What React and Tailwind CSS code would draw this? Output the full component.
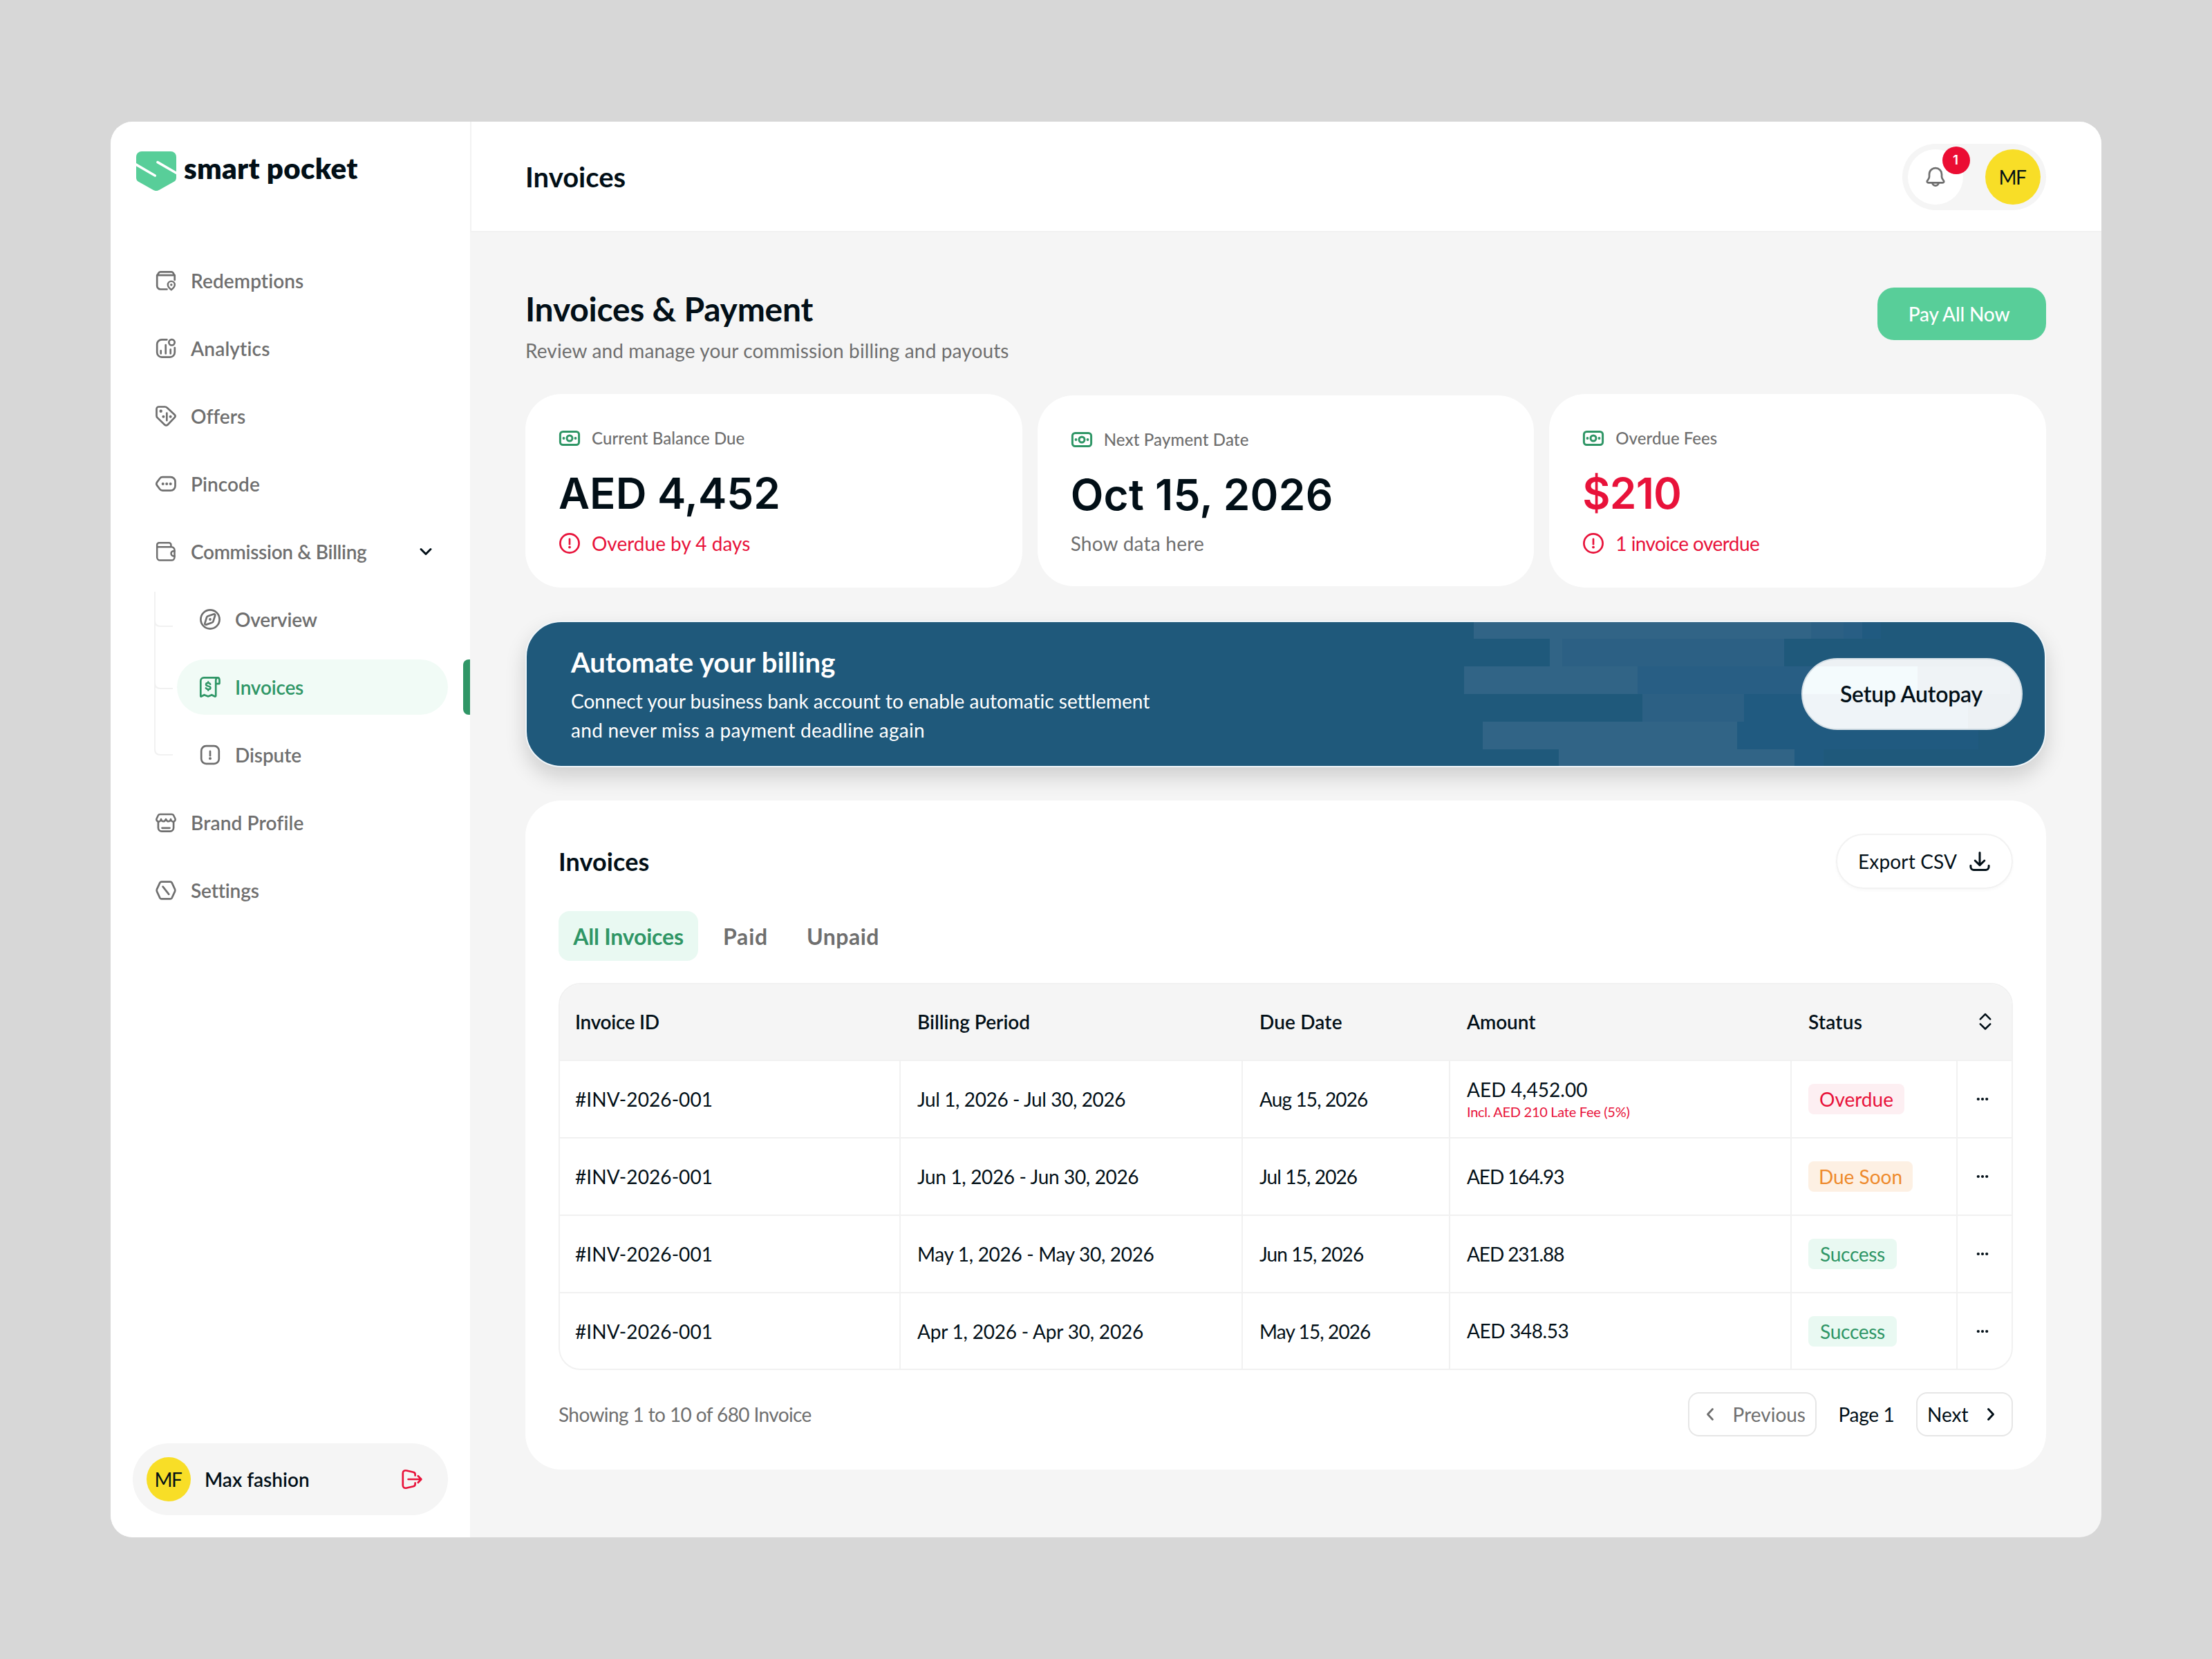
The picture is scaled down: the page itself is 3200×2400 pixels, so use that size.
import { useState } from "react";

function Icon({ children, className = "size-8", strokeWidth = 2.7 }) {
  return (
    <svg
      viewBox="0 0 32 32"
      className={`shrink-0 ${className}`}
      fill="none"
      stroke="currentColor"
      strokeWidth={strokeWidth}
      strokeLinecap="round"
      strokeLinejoin="round"
      aria-hidden="true"
    >
      {children}
    </svg>
  );
}

const Dot = ({ cx, cy, r = 1.8 }) => <circle cx={cx} cy={cy} r={r} fill="currentColor" stroke="none" />;

const RedemptionsIcon = () => (
  <Icon>
    <path d="M17.5 28.5H8.2a5 5 0 0 1-5-5V8.8l2.4-4.1c.6-.9 1.3-1.3 2.4-1.3h16c1.1 0 1.8.4 2.4 1.3l2.3 4.1V15" />
    <path d="M3.4 8.2h25.2" />
    <path d="M23.8 29.2c-2.6-2.1-5-4.5-5-7.3a5 5 0 0 1 10 0c0 2.8-2.4 5.2-5 7.3z" strokeWidth="2.4" />
    <Dot cx="23.8" cy="22" r="1.7" />
  </Icon>
);

const AnalyticsIcon = () => (
  <Icon>
    <path d="M17.4 3.3H10A6.800 6.800 0 0 0 3.2 10.100v11.700a6.800 6.800 0 0 0 6.800 6.800h12a6.800 6.800 0 0 0 6.800-6.800V15" />
    <circle cx="24.5" cy="7.3" r="4.2" />
    <path d="M8.7 19.3v4.2M15.7 11v12.500M22.700 17.500v6" />
  </Icon>
);

const OffersIcon = () => (
  <Icon>
    <path d="M2.5 5.6a3.1 3.1 0 0 1 3.1-3.1h9c1.3 0 2.1.3 3 1.2l10.8 10c1.5 1.5 1.5 3 .1 4.500l-9.700 10c-1.600 1.600-3.200 1.600-4.800.1L3.8 18.4c-.9-.9-1.300-1.700-1.300-3z" />
    <path d="M17.3 11.6v10.6" />
    <Dot cx="8.7" cy="8.8" r="2.2" />
    <Dot cx="12.4" cy="16.700" r="2" />
    <Dot cx="22.6" cy="16.700" r="2" />
  </Icon>
);

const PincodeIcon = () => (
  <Icon>
    <path d="M11.2 6.1h11.600a6.700 6.700 0 0 1 6.700 6.700v6.200a6.700 6.700 0 0 1-6.700 6.700H11.200c-1.700 0-2.900-.6-3.900-1.900l-4-5.400c-1.300-1.700-1.300-3.300 0-5l4-5.400c1-1.300 2.200-1.900 3.900-1.900z" />
    <Dot cx="11.7" cy="16" r="2" />
    <Dot cx="17.2" cy="16" r="2" />
    <Dot cx="22.7" cy="16" r="2" />
  </Icon>
);

const WalletIcon = () => (
  <Icon strokeWidth="2.5">
    <path d="M3.2 9.3v14.900a4.400 4.400 0 0 0 4.400 4.400h16.500a4.400 4.400 0 0 0 4.400-4.400V13.700a4.400 4.400 0 0 0-4.400-4.400H3.200zV6.200a2.900 2.900 0 0 1 2.900-2.900h14.400a2.900 2.900 0 0 1 2.900 2.900v3.100" />
    <path d="M28.5 15.2h-1.400a3.600 3.600 0 0 0 0 7.200h1.400" />
  </Icon>
);

const CompassIcon = () => (
  <Icon>
    <circle cx="16" cy="16" r="13.6" />
    <path d="M11 13.2c.3-1 1-1.700 2-2l8-2.700c1.600-.5 2.600.4 2.100 2l-2.600 8.300c-.3 1-1 1.700-2 2l-8.100 2.800c-1.600.5-2.500-.4-2-2z" />
    <Dot cx="16" cy="16" r="1.9" />
  </Icon>
);

const ReceiptIcon = () => (
  <Icon>
    <path d="M27.300 2.300H6.900A4.600 4.600 0 0 0 2.300 6.900V28.900q0 1 1 .6l4.200-2.300 3.800 1.500q1.800 1.300 3.600 0l3.400-1.500 4.400 2.300q1.400.4 1.500-1V7.200c0-2.900 1-4.900 2.700-4.900 1.500 0 2.600 1.600 2.600 4v3.600q0 1.300-1.300 1.300h-3.600" />
    <path
      d="M16.300 11.800c-.6-1.100-1.700-1.700-3.100-1.700-1.900 0-3.200.8-3.200 2.200 0 3.200 6.500 1.400 6.500 4.600 0 1.500-1.400 2.300-3.300 2.300-1.600 0-2.800-.7-3.400-1.800M13.200 8.600v1.500M13.200 19.200v1.500"
      strokeWidth="2.5"
    />
  </Icon>
);

const DisputeIcon = () => (
  <Icon>
    <rect x="3.2" y="3.2" width="25.6" height="25.6" rx="7" />
    <path d="M16 10.800v6.400" />
    <Dot cx="16" cy="21.200" r="2" />
  </Icon>
);

const StoreIcon = () => (
  <Icon>
    <path d="M4.900 15.400v8.200a5 5 0 0 0 5 5h12.200a5 5 0 0 0 5-5v-8.200M10.500 23.800h11" />
    <path
      d="M3.900 14.200c-1.500-1-1.900-2.600-1.100-4.300l2-4.200C5.400 4.600 6.300 4 7.600 4h16.800c1.300 0 2.200.6 2.800 1.700l2 4.200c.8 1.700.4 3.300-1.100 4.300-2.200 1-4.500.2-5.100-3.200-.8 4.400-5.500 4.400-7 0-1.500 4.400-6.200 4.400-7 0-.6 3.400-2.900 4.200-5.100 3.200z"
      strokeWidth="2.5"
    />
  </Icon>
);

const SettingsIcon = () => (
  <Icon>
    <path d="M9.600 3.600h12.800q1.400 0 2.200 1.300l4.400 9.500q.7 1.600 0 3.200l-4.400 9.500q-.8 1.300-2.200 1.300H9.600q-1.400 0-2.200-1.300L3 17.600q-.7-1.600 0-3.200l4.400-9.500q.8-1.300 2.200-1.300z" />
    <path d="M11.600 10.600l8.600 11" />
  </Icon>
);

const BellIcon = () => (
  <Icon className="size-8 text-[#6f6f6f]">
    <path d="M16 3.200c-5 0-9 3.700-9 8.700v3.600c0 1.600-.4 2.600-1.500 4l-1.200 1.700c-1 1.500-.3 3.100 1.500 3.100h20.400c1.800 0 2.500-1.600 1.500-3.100l-1.200-1.700c-1.100-1.400-1.500-2.400-1.500-4v-3.600c0-5-4-8.700-9-8.700z" />
    <path d="M11.300 24.500c.6 2.500 2.400 4.100 4.700 4.100s4.100-1.600 4.700-4.100" />
  </Icon>
);

const LogoutIcon = () => (
  <Icon className="size-8 text-[#e8123a]">
    <path d="M20.600 10.600V8.900c0-1.800-.8-2.800-2.500-3.200L8.500 3.500C5 2.700 2.800 3.900 2.800 7.200v17.600c0 3.300 2.200 4.500 5.700 3.700l9.600-2.200c1.700-.4 2.500-1.400 2.500-3.200v-1.700" />
    <path d="M10.600 16h18.600M24.800 11.200l4.600 4.800-4.600 4.800" />
  </Icon>
);

const MoneyIcon = () => (
  <Icon className="size-8 text-[#2f9666]" strokeWidth="3">
    <rect x="2.4" y="6.400" width="27.200" height="19.200" rx="4" />
    <circle cx="16" cy="16" r="4" />
    <Dot cx="7.5" cy="16" r="1.900" />
    <Dot cx="24.5" cy="16" r="1.900" />
  </Icon>
);

const AlertIcon = () => (
  <Icon>
    <circle cx="16" cy="16" r="13.6" />
    <path d="M16 9.800v7.400" />
    <Dot cx="16" cy="21.600" r="1.900" />
  </Icon>
);

const DownloadIcon = () => (
  <Icon strokeWidth="3">
    <path d="M16 3.400v18M9.200 15l6.800 6.600 6.800-6.600M2.900 22.300v1.800a4.400 4.400 0 0 0 4.400 4.400h17.400a4.400 4.400 0 0 0 4.400-4.400v-1.800" />
  </Icon>
);

const Logo = () => (
  <svg viewBox="0 0 58 57" className="h-[57px] w-[58px] shrink-0" aria-hidden="true">
    <path
      d="M8 0h42a8 8 0 0 1 8 8v30c0 2.600-1 4.400-3.200 5.800L33 56c-2.700 1.500-5.300 1.500-8 0L3.200 43.800C1 42.400 0 40.600 0 38V8a8 8 0 0 1 8-8z"
      fill="#58ce99"
    />
    <path d="M-1 18.600L27.200 35M31 15.600L59 31.800" stroke="#fff" strokeWidth="3.6" strokeLinecap="round" />
  </svg>
);

const topNav = [
  { label: "Redemptions", icon: RedemptionsIcon, tracking: "tracking-[0.1px]" },
  { label: "Analytics", icon: AnalyticsIcon, tracking: "tracking-[0.15px]" },
  { label: "Offers", icon: OffersIcon, tracking: "" },
  { label: "Pincode", icon: PincodeIcon, tracking: "tracking-[0.05px]" },
];

const billingNav = [
  { label: "Overview", icon: CompassIcon, tracking: "tracking-[-0.2px]" },
  { label: "Invoices", icon: ReceiptIcon, tracking: "tracking-[-0.2px]" },
  { label: "Dispute", icon: DisputeIcon, tracking: "tracking-[-0.1px]" },
];

const bottomNav = [
  { label: "Brand Profile", icon: StoreIcon, tracking: "tracking-[0.15px]" },
  { label: "Settings", icon: SettingsIcon, tracking: "tracking-[-0.15px]" },
];

const invoices = [
  {
    period: "Jul 1, 2026 - Jul 30, 2026",
    periodTracking: "tracking-[-0.39px]",
    due: "Aug 15, 2026",
    amount: "AED 4,452.00",
    amountTracking: "tracking-[0.05px]",
    note: "Incl. AED 210 Late Fee (5%)",
    status: "Overdue",
  },
  {
    period: "Jun 1, 2026 - Jun 30, 2026",
    periodTracking: "tracking-[-0.35px]",
    due: "Jul 15, 2026",
    amount: "AED 164.93",
    amountTracking: "tracking-[-1.1px]",
    status: "Due Soon",
  },
  {
    period: "May 1, 2026 - May 30, 2026",
    periodTracking: "tracking-[-0.31px]",
    due: "Jun 15, 2026",
    amount: "AED 231.88",
    amountTracking: "tracking-[-1.1px]",
    status: "Success",
  },
  {
    period: "Apr 1, 2026 - Apr 30, 2026",
    periodTracking: "tracking-[-0.2px]",
    due: "May 15, 2026",
    amount: "AED 348.53",
    amountTracking: "tracking-[-0.4px]",
    status: "Success",
  },
];

const statusTone = {
  Overdue: "bg-[#fdeff2] text-[#e8123a] w-[139px]",
  "Due Soon": "bg-[#fdf0e3] text-[#ee8a2c] w-[151px]",
  Success: "bg-[#e9f9f2] text-[#2f9666] w-[128px] tracking-[-0.28px]",
};

const tabs = [
  { label: "All Invoices", className: "w-[202px] tracking-[-0.2px]" },
  { label: "Paid", className: "px-5 tracking-[0.8px]" },
  { label: "Unpaid", className: "px-5 tracking-[0.5px]" },
];

const columns = "grid grid-cols-[491px_495px_300px_494px_240px_80px]";

function NavItem({ item, active }) {
  const Glyph = item.icon;
  return (
    <a
      className={`relative flex h-20 items-center gap-5 rounded-full px-8 text-[28px] font-semibold ${
        active ? "bg-[#f1fbf6] text-[#2f9666]" : "text-[#6f6f6f]"
      }`}
    >
      <Glyph />
      <span className={item.tracking}>{item.label}</span>
      {active && <span className="absolute top-0 -right-8 h-20 w-2.5 rounded-l-lg bg-[#2f9666]" />}
    </a>
  );
}

function Avatar({ className }) {
  return (
    <span className={`flex items-center justify-center rounded-full bg-[#f8de27] pr-0.5 text-[28px] tracking-[-1.5px] ${className}`}>
      MF
    </span>
  );
}

function Sidebar() {
  return (
    <aside className="flex w-[520px] shrink-0 flex-col bg-white px-8 pt-[43px] pb-8">
      <div className="flex items-center gap-[11px] pl-[5px]">
        <Logo />
        <span className="pb-2 text-[42px] leading-[49px] font-extrabold tracking-[0.3px]">smart pocket</span>
      </div>

      <nav className="mt-[90px] flex flex-col gap-[18px]">
        {topNav.map((item) => (
          <NavItem key={item.label} item={item} />
        ))}
        <button className="flex h-20 items-center gap-5 pr-4 pl-8 text-[28px] font-semibold text-[#6f6f6f]">
          <WalletIcon />
          <span className="tracking-[-0.31px]">Commission & Billing</span>
          <Icon className="ml-auto size-8 text-[#020f17]" strokeWidth="3">
            <path d="M9 12.500l7 7 7-7" />
          </Icon>
        </button>
        <div className="flex">
          <svg
            viewBox="0 0 64 276"
            className="h-[276px] w-16 shrink-0"
            fill="none"
            stroke="#f1f1f1"
            strokeWidth="2"
            aria-hidden="true"
          >
            <path d="M32 -1v229q0 8 8 8h18M32 42q0 8 8 8h18M32 132q0 8 8 8h18" />
          </svg>
          <div className="flex flex-1 flex-col gap-[18px]">
            {billingNav.map((item) => (
              <NavItem key={item.label} item={item} active={item.label === "Invoices"} />
            ))}
          </div>
        </div>
        {bottomNav.map((item) => (
          <NavItem key={item.label} item={item} />
        ))}
      </nav>

      <div className="mt-auto flex h-[104px] items-center rounded-full bg-[#f5f5f5] pr-9 pl-5">
        <Avatar className="size-16" />
        <span className="ml-5 text-[28px] font-semibold">Max fashion</span>
        <button className="ml-auto">
          <LogoutIcon />
        </button>
      </div>
    </aside>
  );
}

function Header() {
  return (
    <header className="flex h-40 shrink-0 items-center justify-between border-b-2 border-l-2 border-[#f2f2f2] bg-white pt-0.5 pr-20 pl-[78px]">
      <h1 className="text-[40px] leading-[50px] font-bold">Invoices</h1>
      <div className="flex h-24 w-52 items-center justify-between rounded-full bg-[#f5f5f5] px-2">
        <button className="relative flex size-20 items-center justify-center rounded-full bg-white">
          <BellIcon />
          <span className="absolute -top-1 left-[50px] flex size-10 items-center justify-center rounded-full bg-[#eb0d33] pr-0.5 font-['Inter'] text-[19px] font-semibold text-white">
            1
          </span>
        </button>
        <Avatar className="size-20" />
      </div>
    </header>
  );
}

function SummaryCard({ label, labelTracking, value, valueClass, children, className }) {
  return (
    <div className={`flex flex-col rounded-[52px] bg-white p-12 ${className}`}>
      <div className="flex h-8 items-center gap-4 text-2xl font-medium text-[#6f6f6f]">
        <MoneyIcon />
        <span className={labelTracking}>{label}</span>
      </div>
      <p className={`mt-6 font-['Inter'] text-[62px] leading-[80px] font-semibold ${valueClass}`}>{value}</p>
      <div className="mt-4 flex flex-1 items-center gap-4 text-[28px] leading-7">{children}</div>
    </div>
  );
}

function AutopayBanner() {
  return (
    <section className="relative mt-12 flex h-[212px] justify-between overflow-hidden rounded-[52px] border-2 border-[#f0f6fa] bg-[#1f597b] pr-8 pl-16 text-white shadow-[0_14px_30px_rgba(0,0,0,0.16)]">
      <svg viewBox="0 0 2196 208" className="absolute inset-0 h-full w-full" aria-hidden="true">
        <g fill="#316486">
          <rect x="1370" width="488" height="24" />
          <rect x="1480" y="24" width="18" height="40" />
          <rect x="1356" y="64" width="251" height="40" />
          <rect x="1383" y="144" width="368" height="40" />
          <rect x="1493" y="184" width="341" height="24" />
        </g>
        <g fill="#2c6084">
          <rect x="1858" width="47" height="24" />
          <rect x="1498" y="24" width="321" height="40" />
          <rect x="1614" y="104" width="147" height="40" />
        </g>
        <g fill="#285e84">
          <rect x="1905" width="27" height="24" />
          <rect x="1607" y="64" width="405" height="40" />
        </g>
        <g fill="#205a80">
          <rect x="1932" width="27" height="24" />
          <rect x="1761" y="104" width="324" height="40" />
          <rect x="1751" y="144" width="349" height="40" />
          <rect x="1834" y="184" width="42" height="24" />
        </g>
      </svg>
      <div className="relative pt-[33px]">
        <h3 className="text-[40px] leading-[50px] font-bold">Automate your billing</h3>
        <p className="mt-[10px] text-[28px] leading-[42px]">
          <span className="tracking-[-0.01px]">Connect your business bank account to enable automatic settlement</span>
          <br />
          <span className="tracking-[0.3px]">and never miss a payment deadline again</span>
        </p>
      </div>
      <button className="relative mt-[52px] flex h-[104px] w-80 items-center justify-center overflow-hidden rounded-full border-2 border-[#d5dfe6] bg-[#edf1f4] text-[32px] font-semibold tracking-[-0.19px] text-[#020f17]">
        <svg viewBox="0 0 316 100" className="absolute inset-0 h-full w-full" aria-hidden="true">
          <rect y="10" width="166" height="40" fill="#f4fbfd" />
          <rect y="50" width="239" height="50" fill="#eff4f8" />
          <rect x="166" y="10" width="134" height="40" fill="#eff3f6" />
        </svg>
        <span className="relative pr-0.5">Setup Autopay</span>
      </button>
    </section>
  );
}

function InvoiceTable() {
  return (
    <div className="mt-8 h-[560px] overflow-hidden rounded-[32px] border-2 border-[#f1f1f1] text-[28px]">
      <div className={`${columns} h-[111px] items-center border-b-2 border-[#f1f1f1] bg-[#f5f5f5] pb-0.5 font-semibold`}>
        <span className="pl-[22px] tracking-[-0.3px]">Invoice ID</span>
        <span className="pl-[26px]">Billing Period</span>
        <span className="pl-[26px] tracking-[0.15px]">Due Date</span>
        <span className="pl-[26px] tracking-[-0.1px]">Amount</span>
        <span className="pl-[26px] tracking-[0.2px]">Status</span>
        <Icon className="ml-[26px] size-8" strokeWidth="2.6">
          <path d="M8.800 12.300l7.200-7.200 7.200 7.200M8.800 19.300l7.200 7.200 7.200-7.200" />
        </Icon>
      </div>
      {invoices.map((row) => (
        <div key={row.period} className={`${columns} h-28 border-b-2 border-[#f1f1f1] last:h-[109px] last:border-b-0`}>
          <span className="flex items-center pl-[22px] tracking-[0.08px]">#INV-2026-001</span>
          <span className={`flex items-center border-l-2 border-[#f1f1f1] pl-6 ${row.periodTracking}`}>{row.period}</span>
          <span className="flex items-center border-l-2 border-[#f1f1f1] pl-6 tracking-[-0.88px]">{row.due}</span>
          <div className="flex flex-col justify-center border-l-2 border-[#f1f1f1] pl-6">
            <span className={`leading-[35px] ${row.amountTracking}`}>{row.amount}</span>
            {row.note && (
              <span className="mt-0.5 text-xl leading-[25px] tracking-[-0.29px] text-[#e8123a]">{row.note}</span>
            )}
          </div>
          <div className="flex items-center border-l-2 border-[#f1f1f1] pl-6">
            <span className={`flex h-11 items-center justify-center rounded-lg ${statusTone[row.status]}`}>{row.status}</span>
          </div>
          <button className="flex items-center border-l-2 border-[#f1f1f1] pl-5">
            <Icon>
              <Dot cx="9.8" cy="16" r="2.1" />
              <Dot cx="16" cy="16" r="2.1" />
              <Dot cx="22.2" cy="16" r="2.1" />
            </Icon>
          </button>
        </div>
      ))}
    </div>
  );
}

export default function App() {
  const [tab, setTab] = useState("All Invoices");

  return (
    <div className="h-[2400px] w-[3200px] bg-[#d7d7d7] px-40 pt-44 font-['Lato',sans-serif] text-[#020f17] [font-variant-ligatures:none]">
      <div className="flex h-[2048px] overflow-hidden rounded-[32px] bg-[#f5f5f5]">
        <Sidebar />

        <div className="flex flex-1 flex-col">
          <Header />
          <main className="px-20 pt-20">
            <div className="flex items-start justify-between">
              <div>
                <h2 className="pt-px text-5xl leading-[60px] font-bold tracking-[-0.25px]">Invoices & Payment</h2>
                <p className="mt-[13px] text-[28px] leading-[35px] tracking-[0.13px] text-[#6f6f6f]">
                  Review and manage your commission billing and payouts
                </p>
              </div>
              <button className="h-[76px] w-[244px] rounded-3xl bg-[#58ce99] pr-2 text-[28px] font-medium tracking-[-0.15px] text-white">
                Pay All Now
              </button>
            </div>

            <div className="mt-[45px] grid grid-cols-3 items-center gap-[22px]">
              <SummaryCard
                label="Current Balance Due"
                labelTracking="tracking-[0.08px]"
                value="AED 4,452"
                valueClass=""
                className="h-[280px]"
              >
                <span className="flex items-center gap-4 text-[#e8123a]">
                  <AlertIcon />
                  Overdue by 4 days
                </span>
              </SummaryCard>
              <SummaryCard
                label="Next Payment Date"
                labelTracking="tracking-[0.15px]"
                value="Oct 15, 2026"
                valueClass="tracking-[0.25px]"
                className="h-[276px]"
              >
                <span className="tracking-[0.23px] text-[#6f6f6f]">Show data here</span>
              </SummaryCard>
              <SummaryCard
                label="Overdue Fees"
                labelTracking="tracking-[0.05px]"
                value="$210"
                valueClass="tracking-[-0.8px] text-[#e8123a]"
                className="h-[280px]"
              >
                <span className="flex items-center gap-4 tracking-[-0.55px] text-[#e8123a]">
                  <AlertIcon />
                  1 invoice overdue
                </span>
              </SummaryCard>
            </div>

            <AutopayBanner />

            <section className="mt-12 rounded-[52px] bg-white p-12">
              <div className="flex items-center justify-between">
                <h3 className="text-4xl font-bold tracking-[0.1px]">Invoices</h3>
                <button className="flex h-20 w-64 items-center justify-between rounded-full border-2 border-[#f2f2f2] px-[30px] text-[28px] shadow-[0_2px_4px_rgba(0,0,0,0.03)]">
                  <span className="tracking-[0.15px]">Export CSV</span>
                  <DownloadIcon />
                </button>
              </div>

              <nav className="mt-8 flex gap-4" aria-label="Invoice filters">
                {tabs.map((t) => (
                  <button
                    key={t.label}
                    onClick={() => setTab(t.label)}
                    className={`h-[72px] rounded-2xl pt-0.5 text-[32px] font-bold ${t.className} ${
                      tab === t.label ? "bg-[#e9f9f2] text-[#2f9666]" : "text-[#6f6f6f]"
                    }`}
                  >
                    {t.label}
                  </button>
                ))}
              </nav>

              <InvoiceTable />

              <div className="mt-8 flex items-center text-[28px]">
                <span className="tracking-[-0.6px] text-[#6f6f6f]">Showing 1 to 10 of 680 Invoice</span>
                <button className="ml-auto flex h-16 w-[186px] items-center justify-between rounded-2xl border-2 border-[#e6e6e6] px-[14px] text-[#6f6f6f]">
                  <Icon strokeWidth="2.8">
                    <path d="M19.500 8.500L12.500 16l7 7.500" />
                  </Icon>
                  Previous
                </button>
                <span className="w-36 text-center tracking-[-0.31px]">Page 1</span>
                <button className="flex h-16 w-[140px] items-center justify-between rounded-2xl border-2 border-[#e6e6e6] px-[14px]">
                  Next
                  <Icon strokeWidth="3">
                    <path d="M12.500 8.500l7 7.500-7 7.500" />
                  </Icon>
                </button>
              </div>
            </section>
          </main>
        </div>
      </div>
    </div>
  );
}
